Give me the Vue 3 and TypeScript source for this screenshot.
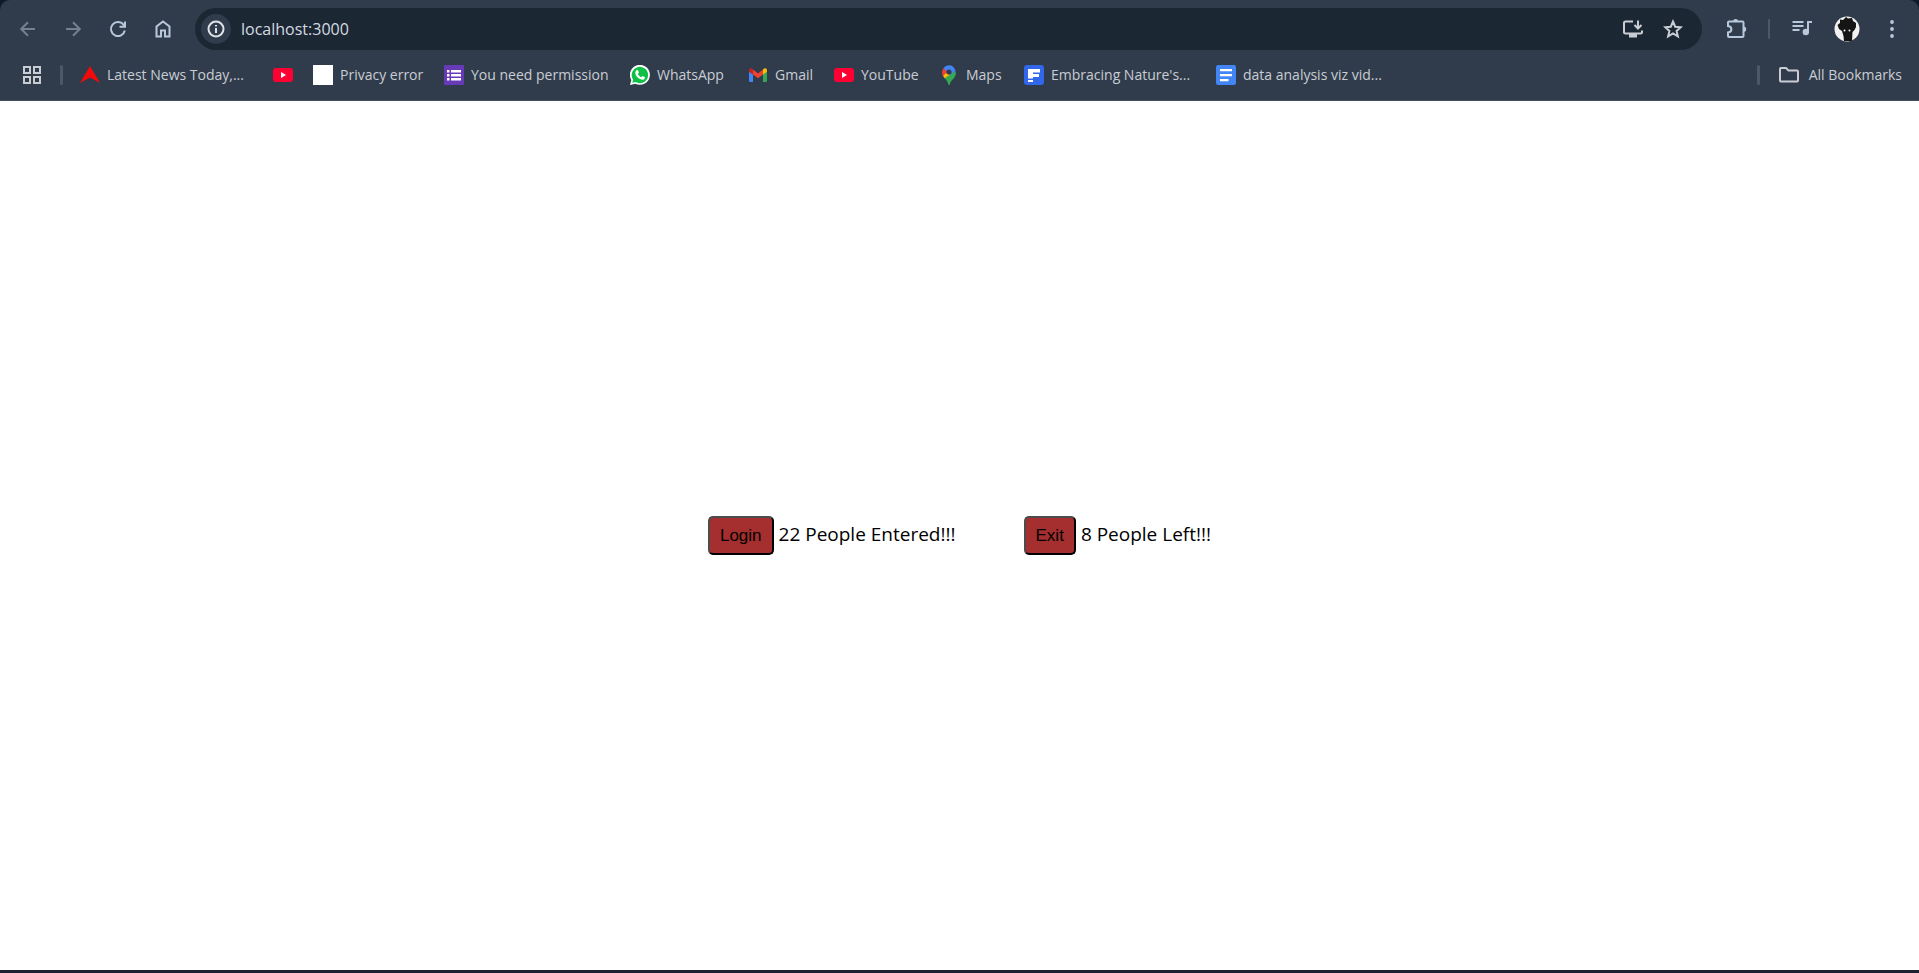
<script setup lang="ts">
import { ref } from 'vue'

interface Bookmark {
  icon: string
  label: string
}

const bookmarks: Bookmark[] = [
  { icon: 'news', label: 'Latest News Today,...' },
  { icon: 'youtube', label: '' },
  { icon: 'blank', label: 'Privacy error' },
  { icon: 'forms', label: 'You need permission' },
  { icon: 'whatsapp', label: 'WhatsApp' },
  { icon: 'gmail', label: 'Gmail' },
  { icon: 'youtube', label: 'YouTube' },
  { icon: 'maps', label: 'Maps' },
  { icon: 'flip', label: "Embracing Nature's..." },
  { icon: 'docs', label: 'data analysis viz vid...' },
]

const address = ref('localhost:3000')
const entered = ref(22)
const left = ref(8)
</script>

<template>
  <div class="window">
    <header class="chrome">
      <div class="toolbar">
        <nav class="nav" aria-label="Navigation">
          <button class="tool dim" aria-label="Back">
            <svg viewBox="0 0 20 20"><path d="M17 10H3.500M10 3.200L3.200 10L10 16.800" /></svg>
          </button>
          <button class="tool dim" aria-label="Forward">
            <svg viewBox="0 0 20 20"><path d="M3 10H16.500M10 3.200L16.800 10L10 16.800" /></svg>
          </button>
          <button class="tool" aria-label="Reload">
            <svg viewBox="0 0 20 20"><path d="M16.800 11.500A7 7 0 1 1 15.500 5.700L17 7.500M17 2.500V7.800H11.500" /></svg>
          </button>
          <button class="tool" aria-label="Home">
            <svg viewBox="0 0 20 20"><path d="M3.500 17.500V7.500L10 2.500L16.500 7.500V17.500H12V11.500H8V17.500Z" /></svg>
          </button>
        </nav>
        <div class="omnibox">
          <button class="info" aria-label="View site information">
            <svg viewBox="0 0 20 20"><circle cx="10" cy="10" r="7.500" /><path d="M10 9V14M10 6V7.600" /></svg>
          </button>
          <input v-model="address" class="address" aria-label="Address" spellcheck="false" />
          <button class="tool pale" aria-label="Install app">
            <svg class="wide" viewBox="0 0 22 20"><path d="M11 2.500H3.500Q2 2.500 2 4V13Q2 14.500 3.500 14.500H18.500Q20 14.500 20 13V11.500M16 1.500V9M12.500 6L16 9.500L19.500 6" /><path class="solid" d="M7 15H15V18.500H7Z" /></svg>
          </button>
          <button class="tool pale" aria-label="Bookmark this tab">
            <svg viewBox="0 0 20 20"><path d="M10 2.500L12.200 7.700L17.800 8.200L13.600 11.900L14.900 17.400L10 14.500L5.100 17.400L6.400 11.900L2.200 8.200L7.800 7.700Z" /></svg>
          </button>
        </div>
        <div class="actions">
          <button class="tool" aria-label="Extensions">
            <svg class="large" viewBox="0 0 22 22"><path d="M4 3.500H17.500Q18.500 3.500 18.500 4.500V18Q18.500 19 17.500 19H4Q3 19 3 18V14.500C7.500 14 7.500 8.500 3 8V4.500Q3 3.500 4 3.500Z" /><path class="solid" d="M8 3.500A2.600 2.600 0 0 1 13.200 3.500ZM18.500 8.500A2.700 2.700 0 0 1 18.500 13.900Z" /></svg>
          </button>
          <span class="divider thin"></span>
          <button class="tool" aria-label="Media controls">
            <svg class="wide" viewBox="0 0 22 20"><path d="M1.500 3H12.500M1.500 7H12.500M1.500 11H8.500M17 14V3H21" /><circle class="solid" cx="14.800" cy="13" r="3.200" /></svg>
          </button>
          <button class="tool" aria-label="Profile">
            <svg class="avatar" viewBox="0 0 26 26"><circle class="face" cx="13" cy="13" r="12.500" /><path class="hair" d="M3.500 9L6 7L6 3.500L9 4L12 1L14 2.500L18 2L19 5L22 7L22 11L20.500 14L18.500 16L18 25H10L9.500 20L8 15L5 13Z" /><circle class="eye" cx="10.500" cy="14.500" r="1" /><circle class="eye" cx="15.500" cy="14.500" r="1" /></svg>
          </button>
          <button class="tool" aria-label="Menu">
            <svg viewBox="0 0 20 20"><circle class="solid" cx="10" cy="3" r="1.900" /><circle class="solid" cx="10" cy="10" r="1.900" /><circle class="solid" cx="10" cy="17" r="1.900" /></svg>
          </button>
        </div>
      </div>

      <div class="bar">
        <button class="tool pale" aria-label="Apps">
          <svg viewBox="0 0 20 20"><path d="M2 2H8V8H2ZM12 2H18V8H12ZM2 12H8V18H2ZM12 12H18V18H12Z" /></svg>
        </button>
        <span class="divider"></span>
        <nav class="bookmarks" aria-label="Bookmarks">
          <a v-for="(mark, index) in bookmarks" :key="index" class="bookmark" href="#" :aria-label="mark.label || 'YouTube'">
            <svg class="fav" viewBox="0 0 20 20">
              <path v-if="mark.icon === 'news'" fill="#f40a0a" d="M10 1L20 18L10 12.500L0 18Z" />
              <template v-else-if="mark.icon === 'youtube'">
                <rect y="3" width="20" height="14" rx="3" fill="#ff0033" />
                <path fill="#fff" d="M8 7L13 10L8 13Z" />
              </template>
              <rect v-else-if="mark.icon === 'blank'" width="20" height="20" fill="#fff" />
              <template v-else-if="mark.icon === 'forms'">
                <rect width="20" height="20" rx="1" fill="#673ab7" />
                <path fill="#fff" d="M3 5H5.500V7.500H3ZM7 5H17V7.500H7ZM3 9H5.500V11.500H3ZM7 9H17V11.500H7ZM3 13H5.500V15.500H3ZM7 13H17V15.500H7Z" />
              </template>
              <template v-else-if="mark.icon === 'whatsapp'">
                <path fill="#fff" d="M0 20L1.300 15A10 10 0 1 1 5.200 18.700Z" />
                <path fill="#10c046" d="M2.300 17.800L3.100 14.600A8.200 8.200 0 1 1 5.600 17Z" />
                <path fill="#fff" d="M6.500 5.300C7.200 4.800 7.900 5 8.200 5.700L8.900 7.400L7.900 9C8.700 10.600 9.700 11.500 11.300 12.200L12.600 11L15 12.200C15 14 13.500 14.900 12 14.700C8.500 14 5.600 11 5.300 8C5.300 6.800 5.700 5.900 6.500 5.300Z" />
              </template>
              <template v-else-if="mark.icon === 'gmail'">
                <path fill="#4285f4" d="M1 6L5 9V17H2.500Q1 17 1 15.500Z" />
                <path fill="#34a853" d="M19 6L15 9V17H17.500Q19 17 19 15.500Z" />
                <path fill="#ea4335" d="M5 4.500L10 8.500L15 4.500V9.500L10 13.300L5 9.500Z" />
                <path fill="#c5221f" d="M1 5.500C1 3 3.500 2.500 5 4.500V9.500L1 6.700Z" />
                <path fill="#fbbc04" d="M19 5.500C19 3 16.500 2.500 15 4.500V9.500L19 6.700Z" />
              </template>
              <template v-else-if="mark.icon === 'maps'">
                <path fill="#34a853" d="M16.500 6C18.500 13 11.500 14 10.500 20H9.500C9 17 7.500 15 5.500 13Z" />
                <path fill="#fbbc04" d="M4 9L8 5L12 9L5.700 13.300C4.600 12 3.700 10.500 4 9Z" />
                <path fill="#ea4335" d="M4.700 3L9 6.500L3.800 11C2.500 8 3 5 4.700 3Z" />
                <path fill="#4285f4" d="M4.700 3C8-1.300 14.800-.7 16.500 6L11 10L8.500 7.500Z" />
                <circle cx="10" cy="7" r="2.600" fill="#303c4c" />
              </template>
              <template v-else-if="mark.icon === 'flip'">
                <rect width="20" height="20" rx="3" fill="#3167ea" />
                <path fill="#fff" d="M4 4H16V7.500H9V9H15V12H9V13.500H4ZM4 15H9V17H4Z" />
              </template>
              <template v-else>
                <rect width="20" height="20" rx="2" fill="#4285f4" />
                <path fill="#fff" d="M4 4H16V6.300H4ZM4 9H16V11.300H4ZM4 14H12.500V16.300H4Z" />
              </template>
            </svg>
            <span v-if="mark.label" class="label">{{ mark.label }}</span>
          </a>
        </nav>
        <span class="divider"></span>
        <button class="all">
          <svg class="folder" viewBox="0 0 22 18"><path d="M2 3Q2 2 3 2H8L10.500 4.500H19Q20 4.500 20 5.500V14.500Q20 15.500 19 15.500H3Q2 15.500 2 14.500Z" /></svg>
          <span>All Bookmarks</span>
        </button>
      </div>
    </header>

    <main class="page">
      <div class="counter">
        <button class="count-button" @click="entered++">Login</button>
        <span>{{ entered }} People Entered!!!</span>
      </div>
      <div class="counter">
        <button class="count-button" @click="left++">Exit</button>
        <span>{{ left }} People Left!!!</span>
      </div>
    </main>
  </div>
</template>

<style>
body {
  margin: 0;
  background: #0f1b2a;
}
</style>

<style scoped>
.window {
  box-sizing: border-box;
  min-height: 100vh;
  display: flex;
  flex-direction: column;
  border-bottom: 3px solid #1c2030;
  font-family: "Segoe UI", "Open Sans", "Noto Sans", sans-serif;
}

button {
  font-family: inherit;
}

.chrome {
  box-sizing: border-box;
  background: #303c4c;
  border-bottom: 1px solid #444e5c;
  border-radius: 10px 10px 0 0;
  color: #c9cdd3;
}

.toolbar {
  display: flex;
  align-items: center;
  padding: 8px 12px 0 13px;
}

.nav {
  display: flex;
  gap: 15px;
  margin-right: 17px;
}

.tool {
  display: flex;
  align-items: center;
  justify-content: center;
  flex: none;
  width: 30px;
  height: 30px;
  padding: 0;
  border: 0;
  background: none;
  color: #b8c8dc;
}

.tool.dim {
  color: #738090;
}

.tool.pale {
  color: #c9cdd3;
}

svg {
  flex: none;
  width: 20px;
  height: 20px;
}

.tool svg,
.info svg,
.folder {
  fill: none;
  stroke: currentColor;
  stroke-width: 2;
}

.tool svg.wide {
  width: 22px;
}

.tool svg.large {
  width: 22px;
  height: 22px;
}

.tool .solid {
  fill: currentColor;
  stroke: none;
}

.omnibox {
  flex: 1;
  display: flex;
  align-items: center;
  gap: 10px;
  height: 42px;
  padding: 0 14px 0 6px;
  border-radius: 21px;
  background: #1b2733;
}

.info {
  display: flex;
  align-items: center;
  justify-content: center;
  width: 30px;
  height: 30px;
  padding: 0;
  border: 0;
  border-radius: 50%;
  background: #303c4c;
  color: #dfe3e8;
}

.address {
  flex: 1;
  min-width: 0;
  padding: 0;
  border: 0;
  outline: 0;
  background: none;
  color: #d5dae0;
  font-family: inherit;
  font-size: 16px;
}

.actions {
  display: flex;
  align-items: center;
  gap: 15px;
  padding-left: 19px;
}

.tool .avatar {
  width: 26px;
  height: 26px;
  stroke: none;
}

.face,
.eye {
  fill: #f2f2f2;
}

.hair {
  fill: #151515;
}

.divider {
  flex: none;
  width: 3px;
  height: 20px;
  border-radius: 2px;
  background: #4a5868;
}

.divider.thin {
  width: 2px;
  margin: 0 2px;
}

.bar {
  display: flex;
  align-items: center;
  height: 50px;
  padding: 0 17px;
}

.bookmarks {
  flex: 1;
  display: grid;
  grid-template-columns: 193px 40px 131px 186px 118px 86px 105px 85px 192px auto;
  justify-content: start;
  padding-left: 17px;
}

.bar > .divider {
  margin-left: 13px;
}

.bookmark {
  display: flex;
  align-items: center;
  gap: 7px;
  color: inherit;
  font-size: 14px;
  line-height: 20px;
  text-decoration: none;
  white-space: nowrap;
}

.all {
  display: flex;
  align-items: center;
  gap: 9px;
  margin-left: 18px;
  padding: 0;
  border: 0;
  background: none;
  color: inherit;
  font-size: 14px;
  line-height: 20px;
}

.folder {
  width: 22px;
  height: 18px;
}

.page {
  flex: 1;
  display: flex;
  align-items: center;
  justify-content: center;
  gap: 68px;
  background: #fff;
  color: #000;
  font-size: 19px;
  line-height: 26px;
}

.counter {
  display: flex;
  align-items: baseline;
  gap: 5px;
}

.count-button {
  padding: 8px 10px;
  border: 2px solid #000;
  border-top-color: #4c4c4c;
  border-left-color: #4c4c4c;
  border-radius: 5px;
  background: #a52e2e;
  color: #000;
  font-family: Arial, "Liberation Sans", sans-serif;
  font-size: 17px;
  line-height: 19px;
}
</style>
